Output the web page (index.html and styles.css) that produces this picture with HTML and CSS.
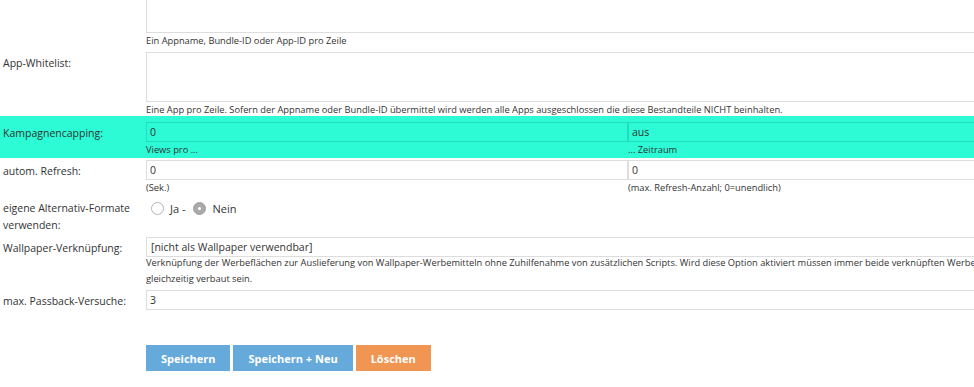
FILE: index.html
```html
<!DOCTYPE html>
<html lang="de">

<head>
  <meta charset="UTF-8" />
  <meta name="viewport" content="width=device-width, initial-scale=1.0" />
  <title>Werbefläche bearbeiten</title>
  <link rel="stylesheet" href="styles.css">
</head>

<body>
  <form class="edit-form">

    <div class="row row-area">
      <div class="label"></div>
      <div class="field">
        <div class="textarea"></div>
        <div class="hint">Ein Appname, Bundle-ID oder App-ID pro Zeile</div>
      </div>
    </div>

    <div class="row row-area">
      <div class="label">App-Whitelist:</div>
      <div class="field">
        <div class="textarea"></div>
        <div class="hint">Eine App pro Zeile. Sofern der Appname oder Bundle-ID übermittel wird werden alle Apps ausgeschlossen die diese Bestandteile NICHT beinhalten.</div>
      </div>
    </div>

    <div class="row row-marked">
      <div class="label">Kampagnencapping:</div>
      <div class="field split">
        <div>
          <div class="input">0</div>
          <div class="hint">Views pro ...</div>
        </div>
        <div>
          <div class="input">aus</div>
          <div class="hint">... Zeitraum</div>
        </div>
      </div>
    </div>

    <div class="row">
      <div class="label">autom. Refresh:</div>
      <div class="field split">
        <div>
          <div class="input">0</div>
          <div class="hint">(Sek.)</div>
        </div>
        <div>
          <div class="input">0</div>
          <div class="hint">(max. Refresh-Anzahl; 0=unendlich)</div>
        </div>
      </div>
    </div>

    <div class="row row-radio">
      <div class="label">eigene Alternativ-Formate verwenden:</div>
      <div class="field radios">
        <span class="radio"></span>
        <span class="radio-text">Ja -</span>
        <span class="radio checked"></span>
        <span class="radio-text">Nein</span>
      </div>
    </div>

    <div class="row">
      <div class="label">Wallpaper-Verknüpfung:</div>
      <div class="field">
        <div class="input select">[nicht als Wallpaper verwendbar]</div>
        <div class="hint hint-long">Verknüpfung der Werbeflächen zur Auslieferung von Wallpaper-Werbemitteln ohne Zuhilfenahme von zusätzlichen Scripts. Wird diese Option aktiviert müssen immer beide verknüpften Werbemittel<br>gleichzeitig verbaut sein.</div>
      </div>
    </div>

    <div class="row">
      <div class="label">max. Passback-Versuche:</div>
      <div class="field">
        <div class="input">3</div>
      </div>
    </div>

    <div class="buttons">
      <button type="button" class="btn btn-save">Speichern</button>
      <button type="button" class="btn btn-save">Speichern + Neu</button>
      <button type="button" class="btn btn-delete">Löschen</button>
    </div>

  </form>
</body>

</html>
```

FILE: styles.css
```css
html,
body {
  margin: 0;
  padding: 0;
  overflow: hidden;
  background: #fff;
}

body {
  font-family: "Open Sans", "DejaVu Sans", sans-serif;
  font-size: 10.5px;
  color: #333;
}

.edit-form {
  margin-top: -22px;
  width: 1110px;
}

.row {
  display: grid;
  grid-template-columns: 146px 964px;
  padding: 2px 0 1px;
}

.row-area {
  padding: 5px 0 0;
}

.row-marked {
  background-color: #2cfbd6;
  padding: 6px 0 2px;
}

.label {
  padding: 3px 0 0 3px;
  line-height: 17px;
}

.textarea {
  height: 48px;
  border: 1px solid #ddd;
  background: #fff;
}

.input {
  height: 18px;
  line-height: 19px;
  border: 1px solid #ddd;
  padding: 0 3px;
  background: #fff;
  white-space: nowrap;
  overflow: hidden;
}

.select {
  padding-left: 4px;
}

.row-marked .input {
  background: transparent;
  border-color: #22ddbc;
}

.split {
  display: grid;
  grid-template-columns: 482px 482px;
}

.hint {
  font-size: 9.3px;
  line-height: 13px;
  margin-top: 1px;
  white-space: nowrap;
}

.hint-long {
  line-height: 16px;
  margin-top: -2px;
}

.row-radio .label {
  padding-top: 3px;
}

.radios {
  display: flex;
  align-items: center;
  height: 17px;
  padding: 3px 0 0 5px;
}

.radio {
  width: 11px;
  height: 11px;
  border: 1px solid #b5b5b5;
  border-radius: 50%;
  background: #fff;
  box-sizing: content-box;
}

.radio.checked {
  position: relative;
  background: #a9a9a9;
  border-color: #a0a0a0;
}

.radio.checked::after {
  content: "";
  position: absolute;
  left: 4px;
  top: 4px;
  width: 3px;
  height: 3px;
  border-radius: 50%;
  background: #fff;
}

.radio-text {
  margin: 0 8px 0 6px;
  font-size: 11px;
}

.buttons {
  display: flex;
  gap: 3px;
  margin: 34px 0 0 146px;
}

.btn {
  height: 26px;
  padding: 0 15px;
  border: none;
  border-radius: 0;
  color: #fff;
  font-family: "Open Sans", "DejaVu Sans", sans-serif;
  font-size: 11px;
  font-weight: bold;
  cursor: pointer;
}

.btn-save {
  background-color: #66aadc;
}

.btn-delete {
  background-color: #f19552;
}
```
